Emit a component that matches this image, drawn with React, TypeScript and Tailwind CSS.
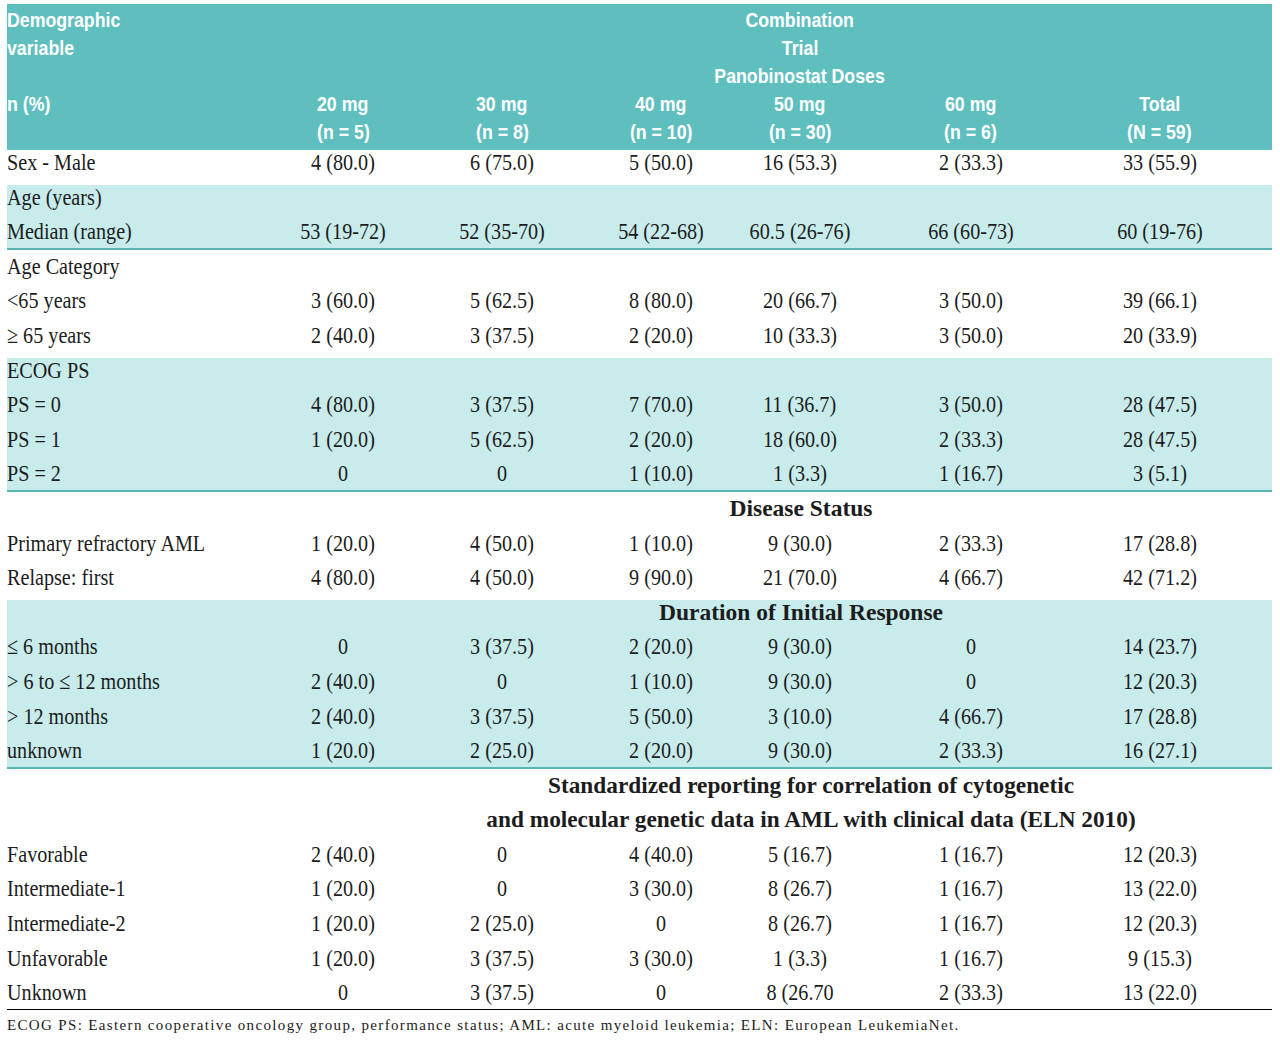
import React from "react";

const COLS =
  "grid grid-cols-[263px_146px_172px_146px_132px_209px_169px_28px]";

function S({ children, left }: { children: React.ReactNode; left?: boolean }) {
  return (
    <span
      className={
        left
          ? "inline-block origin-left scale-x-[0.84] whitespace-nowrap"
          : "inline-block scale-x-[0.84] whitespace-nowrap"
      }
    >
      {children}
    </span>
  );
}

function Row({
  label,
  vals = [],
  last,
}: {
  label: string;
  vals?: string[];
  last?: boolean;
}) {
  return (
    <div className={last ? `${COLS} h-[28.6px]` : `${COLS} h-[34.6px]`}>
      <div className="leading-6 whitespace-nowrap">
        <S left>{label}</S>
      </div>
      {vals.map((v, i) => (
        <div key={i} className="text-center leading-6 whitespace-nowrap">
          <S>{v}</S>
        </div>
      ))}
    </div>
  );
}

function Heading({ text, wide }: { text: string; wide?: boolean }) {
  return (
    <div
      className={
        wide
          ? "h-[34.6px] flex justify-center pl-[343px] font-bold text-[23.3px] leading-6 whitespace-nowrap"
          : "h-[34.6px] flex justify-center pl-[323px] font-bold text-[23.5px] leading-6 whitespace-nowrap"
      }
    >
      {text}
    </div>
  );
}

function H({ children }: { children: React.ReactNode }) {
  return (
    <span className="inline-block scale-x-[0.865] whitespace-nowrap">
      {children}
    </span>
  );
}
function HL({ children }: { children: React.ReactNode }) {
  return (
    <span className="inline-block origin-left scale-x-[0.865] whitespace-nowrap">
      {children}
    </span>
  );
}

const doses: [string, string, string][] = [
  ["col-start-2", "20 mg", "(n = 5)"],
  ["col-start-3", "30 mg", "(n = 8)"],
  ["col-start-4", "40 mg", "(n = 10)"],
  ["col-start-5", "50 mg", "(n = 30)"],
  ["col-start-6", "60 mg", "(n = 6)"],
  ["col-start-7", "Total", "(N = 59)"],
];

function Header() {
  return (
    <div
      className={`${COLS} grid-rows-[28px_28px_28px_28px_28px] bg-[#5fbfbf] pt-[2px] pb-[4px] text-white font-bold font-['Liberation_Sans',Arial,sans-serif] text-[20.5px] leading-[28px]`}
    >
      <div className="col-start-1 row-start-1 whitespace-nowrap">
        <HL>Demographic</HL>
      </div>
      <div className="col-start-1 row-start-2 whitespace-nowrap">
        <HL>variable</HL>
      </div>
      <div className="col-start-1 row-start-4 whitespace-nowrap">
        <HL>n (%)</HL>
      </div>
      <div className="col-start-5 row-start-1 flex justify-center">
        <H>Combination</H>
      </div>
      <div className="col-start-5 row-start-2 flex justify-center">
        <H>Trial</H>
      </div>
      <div className="col-start-5 row-start-3 flex justify-center">
        <H>Panobinostat Doses</H>
      </div>
      {doses.map(([c, a, b]) => (
        <React.Fragment key={a}>
          <div className={`${c} row-start-4 flex justify-center`}>
            <H>{a}</H>
          </div>
          <div className={`${c} row-start-5 flex justify-center`}>
            <H>{b}</H>
          </div>
        </React.Fragment>
      ))}
    </div>
  );
}

export default function App() {
  return (
    <div className="w-[1280px] h-[1042px] bg-white pt-[4px] pl-[7px] text-[#1c1c1c] font-['Liberation_Serif','Times_New_Roman',serif] text-[24px]">
      <div className="w-[1265px]">
        <Header />
        <Row
          label="Sex - Male"
          vals={["4 (80.0)", "6 (75.0)", "5 (50.0)", "16 (53.3)", "2 (33.3)", "33 (55.9)"]}
        />
        <div className="bg-[#c8ebeb] border-b-2 border-[#5ab5b5]">
          <Row label="Age (years)" />
          <Row
            label="Median (range)"
            vals={["53 (19-72)", "52 (35-70)", "54 (22-68)", "60.5 (26-76)", "66 (60-73)", "60 (19-76)"]}
            last
          />
        </div>
        <div className="pt-[4px]">
          <Row label="Age Category" />
          <Row
            label="<65 years"
            vals={["3 (60.0)", "5 (62.5)", "8 (80.0)", "20 (66.7)", "3 (50.0)", "39 (66.1)"]}
          />
          <Row
            label="≥ 65 years"
            vals={["2 (40.0)", "3 (37.5)", "2 (20.0)", "10 (33.3)", "3 (50.0)", "20 (33.9)"]}
          />
        </div>
        <div className="bg-[#c8ebeb] border-b-2 border-[#5ab5b5]">
          <Row label="ECOG PS" />
          <Row
            label="PS = 0"
            vals={["4 (80.0)", "3 (37.5)", "7 (70.0)", "11 (36.7)", "3 (50.0)", "28 (47.5)"]}
          />
          <Row
            label="PS = 1"
            vals={["1 (20.0)", "5 (62.5)", "2 (20.0)", "18 (60.0)", "2 (33.3)", "28 (47.5)"]}
          />
          <Row
            label="PS = 2"
            vals={["0", "0", "1 (10.0)", "1 (3.3)", "1 (16.7)", "3 (5.1)"]}
            last
          />
        </div>
        <div className="pt-[4px]">
          <Heading text="Disease Status" />
          <Row
            label="Primary refractory AML"
            vals={["1 (20.0)", "4 (50.0)", "1 (10.0)", "9 (30.0)", "2 (33.3)", "17 (28.8)"]}
          />
          <Row
            label="Relapse: first"
            vals={["4 (80.0)", "4 (50.0)", "9 (90.0)", "21 (70.0)", "4 (66.7)", "42 (71.2)"]}
          />
        </div>
        <div className="bg-[#c8ebeb] border-b-2 border-[#5ab5b5]">
          <Heading text="Duration of Initial Response" />
          <Row
            label="≤ 6 months"
            vals={["0", "3 (37.5)", "2 (20.0)", "9 (30.0)", "0", "14 (23.7)"]}
          />
          <Row
            label="> 6 to ≤ 12 months"
            vals={["2 (40.0)", "0", "1 (10.0)", "9 (30.0)", "0", "12 (20.3)"]}
          />
          <Row
            label="> 12 months"
            vals={["2 (40.0)", "3 (37.5)", "5 (50.0)", "3 (10.0)", "4 (66.7)", "17 (28.8)"]}
          />
          <Row
            label="unknown"
            vals={["1 (20.0)", "2 (25.0)", "2 (20.0)", "9 (30.0)", "2 (33.3)", "16 (27.1)"]}
            last
          />
        </div>
        <div className="pt-[4px] border-b border-black">
          <Heading text="Standardized reporting for correlation of cytogenetic" wide />
          <Heading text="and molecular genetic data in AML with clinical data (ELN 2010)" wide />
          <Row
            label="Favorable"
            vals={["2 (40.0)", "0", "4 (40.0)", "5 (16.7)", "1 (16.7)", "12 (20.3)"]}
          />
          <Row
            label="Intermediate-1"
            vals={["1 (20.0)", "0", "3 (30.0)", "8 (26.7)", "1 (16.7)", "13 (22.0)"]}
          />
          <Row
            label="Intermediate-2"
            vals={["1 (20.0)", "2 (25.0)", "0", "8 (26.7)", "1 (16.7)", "12 (20.3)"]}
          />
          <Row
            label="Unfavorable"
            vals={["1 (20.0)", "3 (37.5)", "3 (30.0)", "1 (3.3)", "1 (16.7)", "9 (15.3)"]}
          />
          <Row
            label="Unknown"
            vals={["0", "3 (37.5)", "0", "8 (26.70", "2 (33.3)", "13 (22.0)"]}
            last
          />
        </div>
        <div className="pt-[5px] text-[15px] leading-5 tracking-[1.35px] whitespace-nowrap">
          ECOG PS: Eastern cooperative oncology group, performance status; AML: acute myeloid leukemia; ELN: European LeukemiaNet.
        </div>
      </div>
    </div>
  );
}
